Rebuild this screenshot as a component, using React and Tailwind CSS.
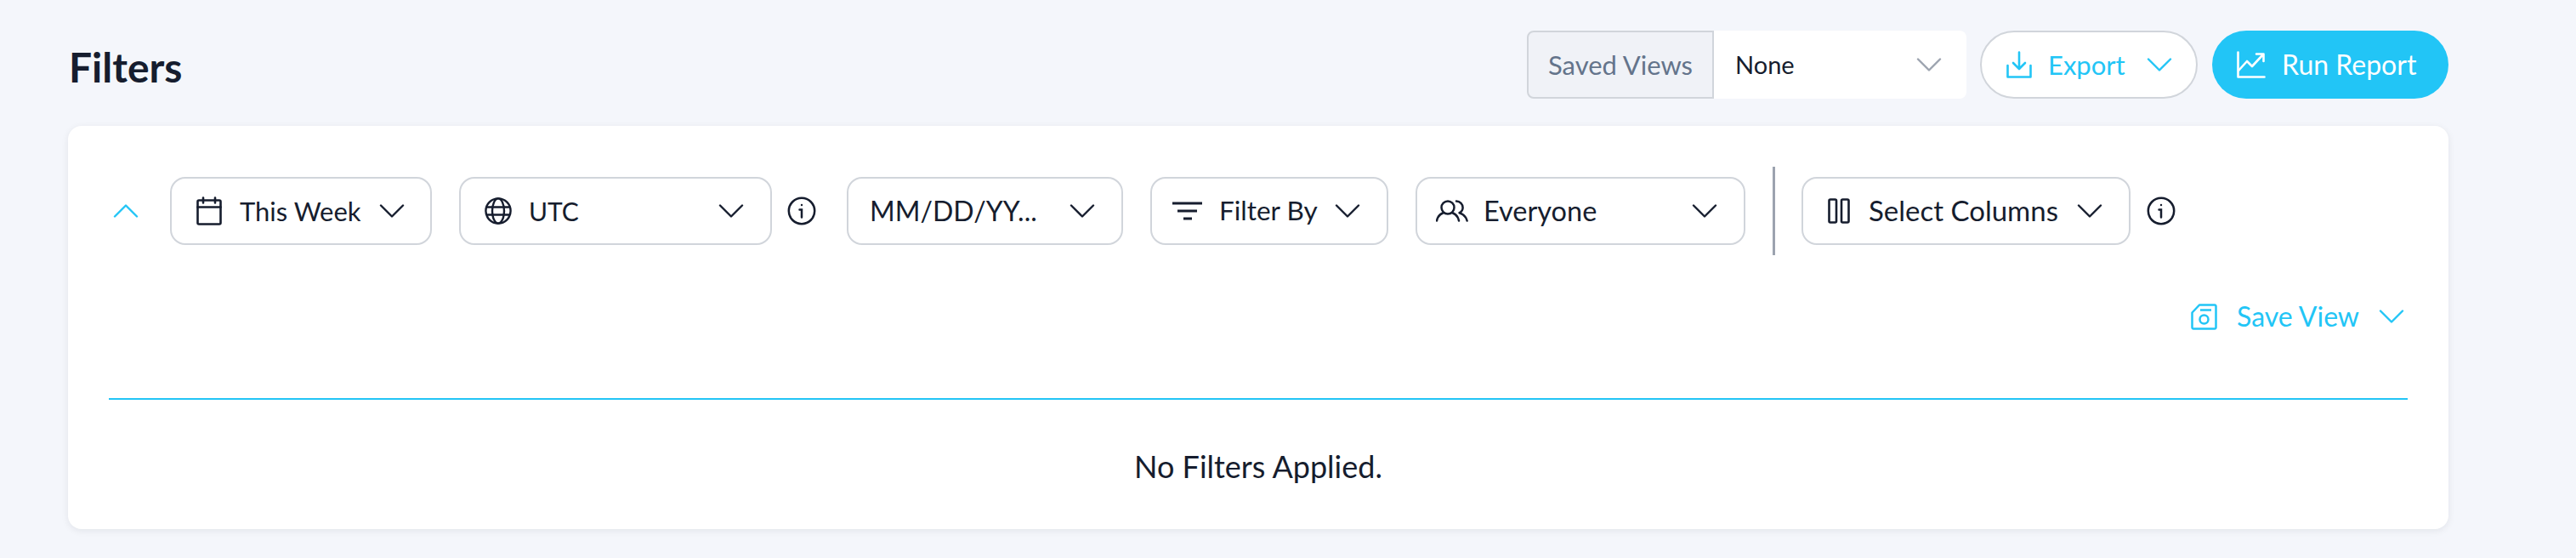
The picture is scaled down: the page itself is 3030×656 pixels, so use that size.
import React from 'react'

const Chevron = ({ className = 'text-[#161d2e]', up = false }) => (
  <svg width="30" height="16" viewBox="0 0 30 16" fill="none" className={`shrink-0 ${className}`}>
    <path d={up ? 'M2 14.5 15 1.5l13 13' : 'M2 1.5l13 13 13-13'} stroke="currentColor" strokeWidth="2.4" strokeLinecap="round" strokeLinejoin="round" />
  </svg>
)

const CalendarIcon = () => (
  <svg width="30" height="34" viewBox="0 0 30 34" fill="none" stroke="currentColor" strokeWidth="2.6" strokeLinecap="round" strokeLinejoin="round" className="shrink-0">
    <rect x="1.5" y="4.5" width="27" height="28" rx="1.5" />
    <path d="M1.5 12.5h27M8 1.5v6M22 1.5v6" />
  </svg>
)

const GlobeIcon = () => (
  <svg width="32" height="32" viewBox="0 0 32 32" fill="none" stroke="currentColor" strokeWidth="2.4" className="shrink-0">
    <circle cx="16" cy="16" r="14.6" />
    <ellipse cx="16" cy="16" rx="7" ry="14.6" />
    <path d="M2.5 11.5h27M2.5 20.5h27" />
  </svg>
)

const InfoIcon = () => (
  <svg width="34" height="34" viewBox="0 0 34 34" fill="none" stroke="currentColor" strokeWidth="2.5" strokeLinecap="round" className="shrink-0 text-[#161d2e]">
    <circle cx="17" cy="17" r="15.2" />
    <path d="M14.5 15.5H17v9" />
    <circle cx="17" cy="10" r="1.2" fill="currentColor" stroke="none" />
  </svg>
)

const FilterIcon = () => (
  <svg width="36" height="22" viewBox="0 0 36 22" fill="none" stroke="currentColor" strokeWidth="2.8" className="shrink-0">
    <path d="M0 2h35M6 11h23M13 20h10" />
  </svg>
)

const UsersIcon = () => (
  <svg width="38" height="26" viewBox="0 0 38 26" fill="none" stroke="currentColor" strokeWidth="2.5" strokeLinecap="round" strokeLinejoin="round" className="shrink-0">
    <circle cx="14" cy="9" r="7.5" />
    <path d="M1 24.5c1-5 4-8 8-9.5M27 24.5c-1-5-4-8-8-9.5" />
    <path d="M24 1.6c4.5 0 7.6 3.3 7.6 7.4 0 3-1.8 5.2-4 6.2 4.2 1.3 7.8 4.8 9 9.3" />
  </svg>
)

const ColumnsIcon = () => (
  <svg width="26" height="30" viewBox="0 0 26 30" fill="none" stroke="currentColor" strokeWidth="2.6" strokeLinejoin="round" className="shrink-0">
    <rect x="1.5" y="1.5" width="8.5" height="27" rx="1.5" />
    <rect x="16" y="1.5" width="8.5" height="27" rx="1.5" />
  </svg>
)

const SaveIcon = () => (
  <svg width="31" height="31" viewBox="0 0 31 31" fill="none" stroke="currentColor" strokeWidth="2.5" strokeLinejoin="round" className="shrink-0">
    <path d="M10 1.5h18A1.5 1.5 0 0 1 29.5 3v25a1.5 1.5 0 0 1-1.5 1.5H3A1.5 1.5 0 0 1 1.5 28V10.5Z" />
    <path d="M11 7.5h13" />
    <circle cx="15.5" cy="18.5" r="5" />
  </svg>
)

const ExportIcon = () => (
  <svg width="30" height="32" viewBox="0 0 30 32" fill="none" stroke="currentColor" strokeWidth="2.6" strokeLinecap="round" strokeLinejoin="round" className="shrink-0">
    <path d="M15 1.5V20M8 14l7 7 7-7" />
    <path d="M1.5 17v13.5h27V17" />
  </svg>
)

const ChartIcon = () => (
  <svg width="34" height="32" viewBox="0 0 34 32" fill="none" stroke="currentColor" strokeWidth="2.6" strokeLinecap="round" strokeLinejoin="round" className="shrink-0">
    <path d="M1.5 1.5v29h31" />
    <path d="M2 23l10-11 6 6L31 4M23 3.5h8.5V12" />
  </svg>
)

function FilterButton({ icon, label, width, gap = 'gap-[20px]', pad = 'pl-[32px]', text = 'text-[32px]' }) {
  return (
    <button className={`h-[80px] ${width} ${pad} pr-[31px] shrink-0 flex items-center ${gap} rounded-[18px] border-2 border-[#d1d5db] bg-white text-[#161d2e] ${text}`}>
      {icon}
      <span className="whitespace-nowrap">{label}</span>
      <span className="ml-auto"><Chevron /></span>
    </button>
  )
}

export default function App() {
  return (
    <div className="min-h-[656px] bg-[#f4f6fb] pl-[80px] pr-[150px] pt-[36px] text-[31px] text-[#161d2e] font-['Lato',sans-serif]">
      {/* Header */}
      <div className="flex items-center justify-between h-[80px] mb-[32px]">
        <h1 className="text-[48px] font-bold pl-[1px] pt-[6px]">Filters</h1>
        <div className="flex items-center">
          <div className="flex h-[80px] w-[517px] mr-[16px]">
            <span className="w-[220px] flex items-center justify-center rounded-l-[8px] border-2 border-[#d1d5db] bg-[#f0f2f7] text-[#64748b] text-[31px]">Saved Views</span>
            <div className="flex-1 flex items-center justify-between pl-[25px] pr-[29px] rounded-r-[8px] bg-white text-[29px]">
              <span>None</span>
              <Chevron className="text-[#9ca3af]" />
            </div>
          </div>
          <button className="h-[80px] w-[256px] mr-[17px] pl-[29px] pr-[28px] flex items-center gap-[19px] rounded-full border-2 border-[#d1d5db] bg-white text-[#22c5f6]">
            <ExportIcon />
            <span>Export</span>
            <span className="ml-auto"><Chevron className="text-[#22c5f6]" /></span>
          </button>
          <button className="h-[80px] w-[278px] pl-[29px] flex items-center gap-[19px] rounded-full bg-[#22c5f6] text-white text-[32px]">
            <ChartIcon />
            <span>Run Report</span>
          </button>
        </div>
      </div>

      {/* Card */}
      <div className="h-[474px] rounded-[16px] bg-white px-[48px] pt-[48px] shadow-[0_2px_8px_rgba(17,24,39,0.08)]">
        <div className="flex items-center h-[104px]">
          <div className="w-[72px] shrink-0 pl-[5px]">
            <Chevron up className="text-[#22c5f6]" />
          </div>
          <FilterButton icon={<CalendarIcon />} label="This Week" width="w-[308px]" pad="pl-[29px]" gap="gap-[21px]" text="text-[31px]" />
          <div className="w-[32px] shrink-0" />
          <FilterButton icon={<GlobeIcon />} label="UTC" width="w-[368px]" pad="pl-[28px]" text="text-[30px]" />
          <div className="ml-[18px] mr-[36px]"><InfoIcon /></div>
          <FilterButton label="MM/DD/YY..." width="w-[325px]" pad="pl-[25px]" />
          <div className="w-[32px] shrink-0" />
          <FilterButton icon={<FilterIcon />} label="Filter By" width="w-[280px]" pad="pl-[24px]" gap="gap-[19px]" text="text-[31.5px]" />
          <div className="w-[32px] shrink-0" />
          <FilterButton icon={<UsersIcon />} label="Everyone" width="w-[388px]" pad="pl-[22px]" gap="gap-[18px]" text="text-[32.5px]" />
          <div className="ml-[32px] mr-[31px] w-[3px] h-[104px] bg-[#9ca3af] shrink-0" />
          <FilterButton icon={<ColumnsIcon />} label="Select Columns" width="w-[387px]" pad="pl-[29px]" gap="gap-[22px]" text="text-[33px]" />
          <div className="ml-[19px]"><InfoIcon /></div>
        </div>

        <div className="flex justify-end items-center h-[48px] mt-[48px] pr-[4px] gap-[23px] text-[#22c5f6] text-[32px]">
          <SaveIcon />
          <span>Save View</span>
          <Chevron className="text-[#22c5f6]" />
        </div>

        <div className="h-[2px] bg-[#22c5f6] mt-[72px]" />
        <p className="h-[152px] pt-[4px] flex items-center justify-center text-[36px]">No Filters Applied.</p>
      </div>
    </div>
  )
}
